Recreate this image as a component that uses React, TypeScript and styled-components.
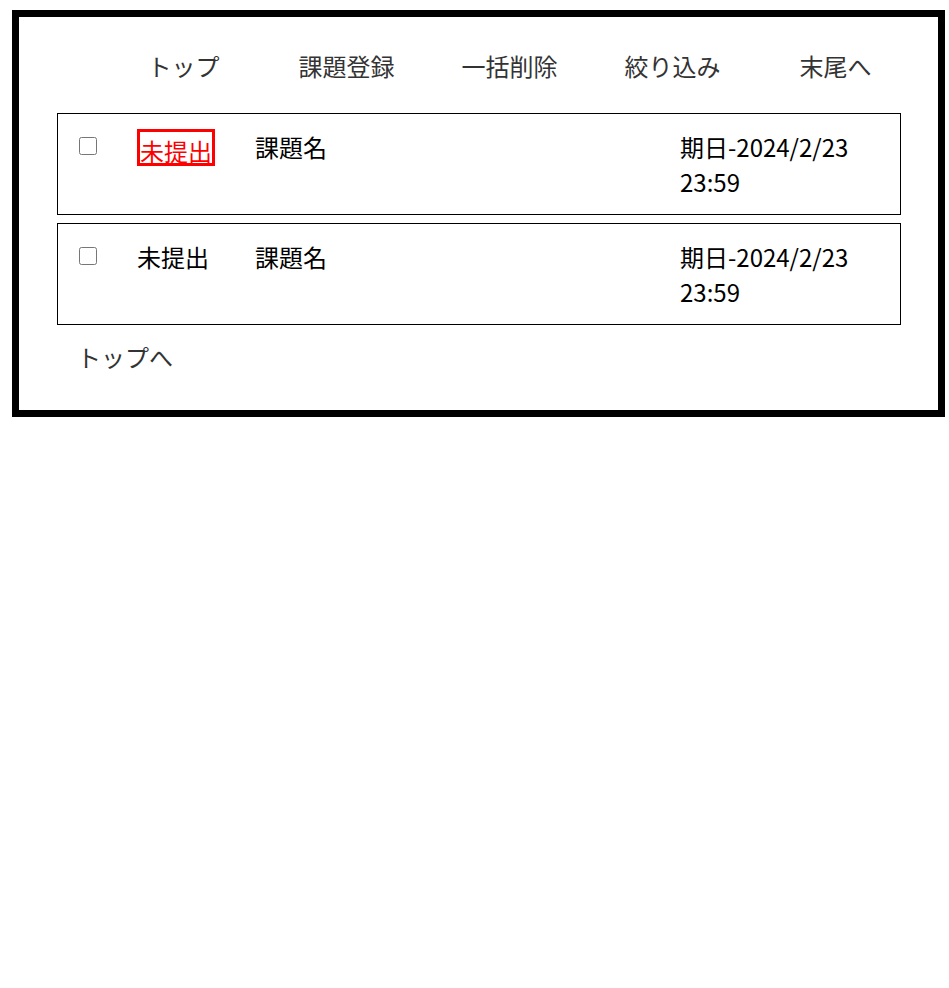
import React from "react";
import styled, { createGlobalStyle } from "styled-components";

const GlobalStyle = createGlobalStyle`
  html, body {
    margin: 0;
    padding: 0;
    background: #fff;
  }
  body {
    font-family: "Noto Sans CJK JP", "Noto Sans", sans-serif;
    font-size: 24px;
  }
`;

const Page = styled.div`
  padding: 10px 4px 0 12px;
`;

const Frame = styled.div`
  box-sizing: border-box;
  width: 933px;
  height: 407px;
  border: 7px solid #000;
  padding: 31px 37px 0 38px;
`;

const Nav = styled.nav`
  display: grid;
  grid-template-columns: repeat(5, 163px);
  margin: 0 0 30px 45px;
`;

const NavLink = styled.a`
  color: #333;
  text-align: center;
  text-decoration: none;
  font-size: 24px;
`;

const List = styled.div`
  display: flex;
  flex-direction: column;
  gap: 8px;
`;

const Row = styled.div`
  display: grid;
  grid-template-columns: 58px 119px 424px 1fr;
  align-items: start;
  border: 1px solid #000;
  padding: 15px 20px 15px 21px;
  color: #000;
`;

const Check = styled.input.attrs({ type: "checkbox" })`
  width: 18px;
  height: 18px;
  margin: 8px 0 0 0;
`;

const Status = styled.span<{ $alert?: boolean }>`
  justify-self: start;
  ${(p) =>
    p.$alert
      ? `
    color: #f00;
    border: 3px solid #f00;
    line-height: 25px;
    padding-top: 6px;
    margin-top: 0;
    text-decoration: underline;
    text-underline-offset: 2px;
    text-decoration-thickness: 1px;
  `
      : ``}
`;

const Name = styled.span`
  margin-left: -1px;
`;

const Due = styled.span``;

const Footer = styled.a`
  display: block;
  margin: 14px 0 0 20px;
  color: #333;
  text-decoration: none;
`;

const tasks = [
  { id: 1, alert: true, status: "未提出", name: "課題名", due: "期日-2024/2/23 23:59" },
  { id: 2, alert: false, status: "未提出", name: "課題名", due: "期日-2024/2/23 23:59" },
];

const navItems = ["トップ", "課題登録", "一括削除", "絞り込み", "末尾へ"];

export default function App() {
  return (
    <>
      <GlobalStyle />
      <Page>
        <Frame>
          <Nav>
            {navItems.map((n) => (
              <NavLink key={n}>{n}</NavLink>
            ))}
          </Nav>
          <List>
            {tasks.map((t) => (
              <Row key={t.id}>
                <Check />
                <Status $alert={t.alert}>{t.status}</Status>
                <Name>{t.name}</Name>
                <Due>{t.due}</Due>
              </Row>
            ))}
          </List>
          <Footer>トップへ</Footer>
        </Frame>
      </Page>
    </>
  );
}
